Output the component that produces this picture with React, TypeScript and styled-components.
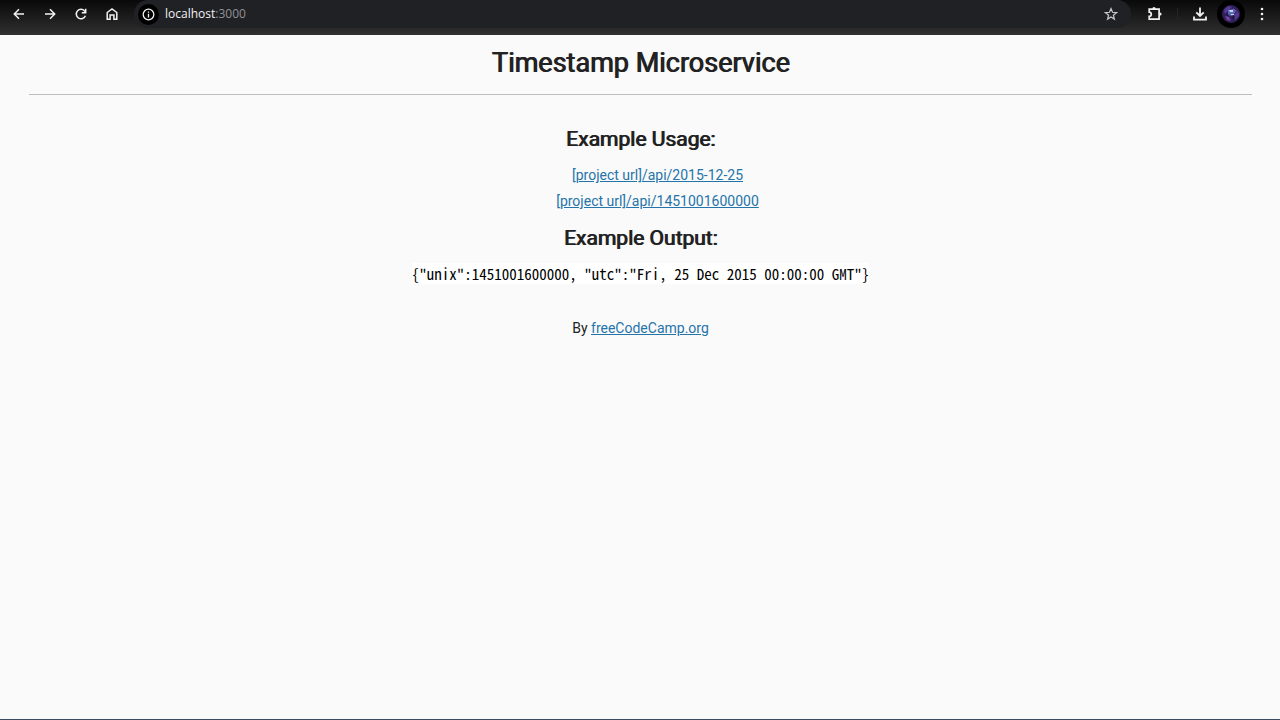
import React from "react";
import styled, { createGlobalStyle } from "styled-components";

const GlobalStyle = createGlobalStyle`
  * { box-sizing: border-box; }
  body {
    margin: 0;
    background: #fafafa;
    color: #222;
    font-family: Roboto, "Liberation Sans", sans-serif;
    font-size: 14px;
  }
`;

const Screen = styled.div`
  display: flex;
  flex-direction: column;
  min-height: 100vh;
  border-bottom: 1px solid #3c4b60;
`;

const Toolbar = styled.nav`
  display: flex;
  align-items: center;
  height: 35px;
  padding: 0 3px 7px;
  background: linear-gradient(#090909, #303030);
`;

const IconButton = styled.button<{ $width?: number }>`
  display: flex;
  flex: none;
  align-items: center;
  justify-content: center;
  width: ${(p) => p.$width ?? 31}px;
  height: 28px;
  padding: 0;
  border: 0;
  background: transparent;
  color: #f2f2f2;
`;

const AddressBar = styled.div`
  display: flex;
  flex: 1;
  align-items: center;
  gap: 6px;
  height: 28px;
  margin: 0 8px 0 7px;
  padding: 0 6px 0 4px;
  border-radius: 14px;
  background: #202125;
`;

const SiteInfo = styled(IconButton)`
  width: 21px;
  height: 21px;
  border-radius: 50%;
  background: #000;
`;

const Address = styled.div`
  flex: 1;
  color: #8f9195;
  font: 12px/16px "Open Sans", "Noto Sans", sans-serif;

  span { color: #f1f1f1; }
`;

const Divider = styled.span`
  width: 1px;
  height: 12px;
  margin: 0 6px 0 7px;
  background: #242427;
`;

const Avatar = styled(IconButton)`
  width: 28px;
  margin: 0 1px 0 2px;
  border-radius: 50%;
  background: #000;
`;

const Page = styled.main`
  flex: 1;
  padding: 0 28px 0 29px;
  text-align: center;
`;

const Title = styled.h1`
  margin: 0;
  padding: 10px 0 13px;
  border-bottom: 1px solid #bdbdbd;
  font-size: 27px;
  font-weight: 400;
  line-height: 36px;
  text-shadow: 1px 0 currentColor;
`;

const Heading = styled.h3`
  margin: 0;
  font-size: 21px;
  font-weight: 400;
  line-height: 28px;
  text-shadow: 1px 0 currentColor;
`;

const Examples = styled.section`
  padding-top: 30px;
`;

const LinkList = styled.ul`
  margin: 0;
  padding: 9px 0 10px 34px;
  list-style: none;
  line-height: 26px;
`;

const Link = styled.a`
  color: #2574a9;
`;

const Output = styled.p`
  margin: 0;
  padding-top: 12px;
  line-height: 20px;
`;

const Code = styled.code`
  background: #fff;
  color: #000;
  font-family: "Noto Sans Mono CJK SC", "Liberation Mono", monospace;
  font-size: 15px;
  line-height: 20px;
`;

const Credit = styled.p`
  margin: 0;
  padding-top: 33px;
  line-height: 20px;
`;

const line = { fill: "none", stroke: "currentColor", strokeWidth: 1.5 };

const BackIcon = () => (
  <svg width="14" height="14" viewBox="0 0 14 14" {...line}>
    <path d="M12 7H2.5M7 2.3 2.3 7 7 11.7" />
  </svg>
);

const ForwardIcon = () => (
  <svg width="14" height="14" viewBox="0 0 14 14" {...line}>
    <path d="M2 7h9.5M7 2.3 11.7 7 7 11.7" />
  </svg>
);

const ReloadIcon = () => (
  <svg width="14" height="14" viewBox="0 0 14 14" {...line}>
    <path d="M11.4 8.7A4.7 4.7 0 1 1 10.6 4L11.5 5" />
    <path d="M11.7 1.7v4H7.8" />
  </svg>
);

const HomeIcon = () => (
  <svg width="14" height="14" viewBox="0 0 14 14" {...line}>
    <path d="M2.2 12.2V5.5L7 1.9l4.8 3.6v6.7H8.9V8H5.1v4.2Z" />
  </svg>
);

const InfoIcon = () => (
  <svg width="13" height="13" viewBox="0 0 13 13" {...line} strokeWidth={1.3}>
    <circle cx="6.5" cy="6.5" r="5.3" />
    <path d="M6.5 5.8v3.8M6.5 3.4v1.4" />
  </svg>
);

const StarIcon = () => (
  <svg width="14" height="14" viewBox="0 0 14 14" {...line} stroke="#c7c8ca" strokeWidth={1.2}>
    <path d="m7 1.6 1.5 3.7 4 .3-3.1 2.6 1 3.9L7 10l-3.4 2.1 1-3.9-3.1-2.6 4-.3Z" />
  </svg>
);

const ExtensionIcon = () => (
  <svg width="16" height="16" viewBox="0 0 16 16" {...line} strokeWidth={1.7}>
    <path d="M2.2 3.2h9.9v9.9H2.2v-2.8a2.1 2.1 0 0 0 0-4.2Z" />
    <path d="M5.4 3V2.5a1.6 1.6 0 0 1 3.2 0V3ZM12.4 6.4h.6a1.6 1.6 0 0 1 0 3.2h-.6Z" fill="currentColor" stroke="none" />
  </svg>
);

const DownloadIcon = () => (
  <svg width="16" height="16" viewBox="0 0 16 16" {...line} strokeWidth={1.8}>
    <path d="M8 1.5v8.2M4.3 6.3 8 10l3.7-3.7M2 10.5v3.2h12v-3.2" />
  </svg>
);

const AvatarIcon = () => (
  <svg width="18" height="18" viewBox="0 0 18 18">
    <circle cx="9" cy="9" r="9" fill="#30205c" />
    <path d="M2 5 6 1l4 1-3 3-4 4ZM12 10l4-4 1 5-4 4Z" fill="#543a91" />
    <path d="M3 11l4 1 2 4-4-1ZM11 3l4 3-3 2Z" fill="#7542a0" />
    <path d="M6 5l6-1 1 4-3 3-4-1Z" fill="#5967ae" />
    <path d="M7 5h4v2H8ZM9 9h3v1H9Z" fill="#b9d6f2" />
    <path d="M4 8l3 2-2 1ZM10 12l3-1-2 4Z" fill="#171638" />
  </svg>
);

const MenuIcon = () => (
  <svg width="14" height="14" viewBox="0 0 14 14" fill="currentColor">
    <circle cx="7" cy="2" r="1.3" />
    <circle cx="7" cy="7" r="1.3" />
    <circle cx="7" cy="12" r="1.3" />
  </svg>
);

export default function App() {
  return (
    <Screen>
      <GlobalStyle />
      <Toolbar aria-label="Browser toolbar">
        <IconButton aria-label="Back"><BackIcon /></IconButton>
        <IconButton aria-label="Forward"><ForwardIcon /></IconButton>
        <IconButton aria-label="Reload"><ReloadIcon /></IconButton>
        <IconButton aria-label="Home"><HomeIcon /></IconButton>
        <AddressBar>
          <SiteInfo aria-label="View site information"><InfoIcon /></SiteInfo>
          <Address><span>localhost</span>:3000</Address>
          <IconButton $width={28} aria-label="Bookmark this page"><StarIcon /></IconButton>
        </AddressBar>
        <IconButton aria-label="Extensions"><ExtensionIcon /></IconButton>
        <Divider />
        <IconButton aria-label="Downloads"><DownloadIcon /></IconButton>
        <Avatar aria-label="Profile"><AvatarIcon /></Avatar>
        <IconButton aria-label="Menu"><MenuIcon /></IconButton>
      </Toolbar>
      <Page>
        <Title>Timestamp Microservice</Title>
        <Examples>
          <Heading>Example Usage:</Heading>
          <LinkList>
            <li><Link href="api/2015-12-25">[project url]/api/2015-12-25</Link></li>
            <li><Link href="api/1451001600000">[project url]/api/1451001600000</Link></li>
          </LinkList>
          <Heading>Example Output:</Heading>
          <Output>
            <Code>{'{"unix":1451001600000, "utc":"Fri, 25 Dec 2015 00:00:00 GMT"}'}</Code>
          </Output>
        </Examples>
        <Credit>
          By <Link href="https://www.freecodecamp.org/">freeCodeCamp.org</Link>
        </Credit>
      </Page>
    </Screen>
  );
}
